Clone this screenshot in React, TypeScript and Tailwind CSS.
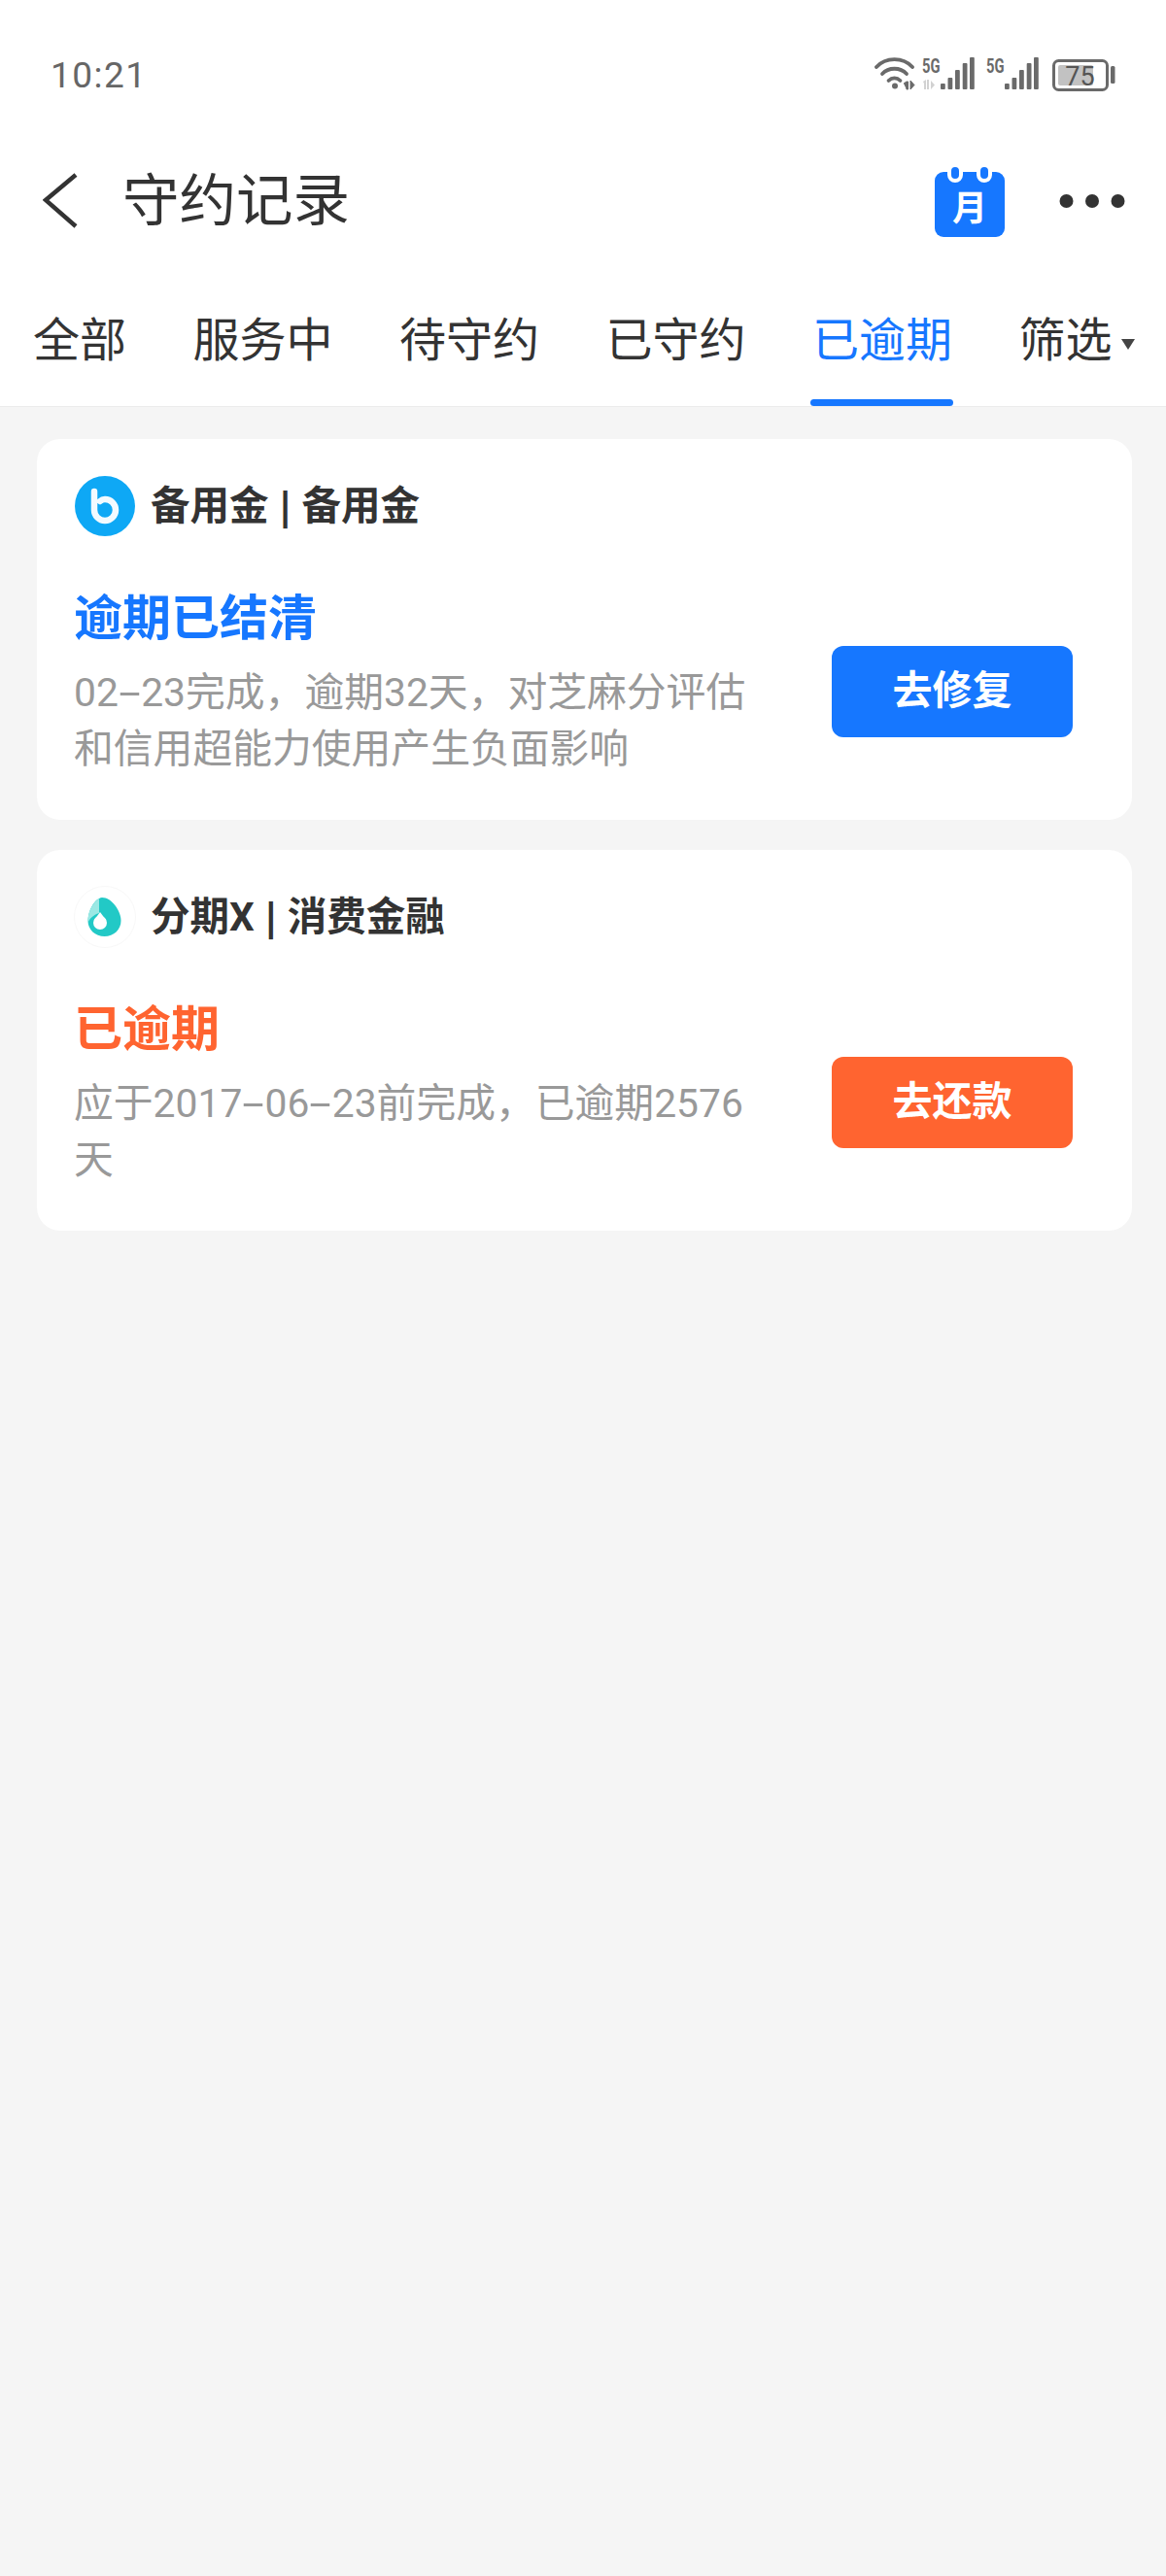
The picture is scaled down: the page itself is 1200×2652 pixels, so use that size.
const FONT = "font-['Roboto','Noto_Sans_CJK_SC',sans-serif]";

function StatusIcons() {
  const bars = [
    [0, 31],
    [7.5, 25],
    [15, 17],
    [22.7, 10],
    [30, 4],
  ];
  return (
    <svg width="250" height="40" viewBox="0 0 250 40" className="block -mt-[4px]">
      <g fill="none" stroke="#6a6a6a" strokeWidth="3.8" strokeLinecap="round">
        <path d="M2 14 C11.500 3.500 29.500 3.500 39 14" />
        <path d="M8 21 C14.500 14 26.500 14 33 21" />
        <path d="M14.500 28 C18 24.500 23 24.500 26.500 28" />
      </g>
      <circle cx="21" cy="33.5" r="3" fill="#6a6a6a" />
      <path d="M30 31 l3 -2 v8 M33 29 h1.5 v8 h-1.5 M37 28 v9 l4 -4.5 z" fill="#6a6a6a" stroke="#6a6a6a" strokeWidth="1" />
      <text x="49" y="19.500" fontFamily="Roboto, sans-serif" fontWeight="700" fontSize="21" fill="#6a6a6a" textLength="18.500" lengthAdjust="spacingAndGlyphs">5G</text>
      <path d="M50 29 l3 -2 v10 h-2 v-6 M54 27 h2 v10 h-2 z M58 28 v9 l4 -4.5 z" fill="#d2d2d2" />
      {bars.map(([x, y]) => (
        <rect key={x} x={68 + x} y={y} width="4.8" height={37 - y} rx="1" fill="#6a6a6a" />
      ))}
      <text x="115" y="19.500" fontFamily="Roboto, sans-serif" fontWeight="700" fontSize="21" fill="#6a6a6a" textLength="18.500" lengthAdjust="spacingAndGlyphs">5G</text>
      {bars.map(([x, y]) => (
        <rect key={x} x={134 + x} y={y} width="4.8" height={37 - y} rx="1" fill="#6a6a6a" />
      ))}
      <rect x="184.5" y="7.5" width="55" height="30" rx="5" fill="none" stroke="#6a6a6a" strokeWidth="3" />
      <rect x="189" y="12" width="36" height="21" rx="2" fill="#c2c2c2" />
      <text x="211.5" y="32.500" textAnchor="middle" fontFamily="Roboto, sans-serif" fontSize="27" fill="#555">75</text>
      <rect x="243" y="13" width="4.5" height="18" rx="1.5" fill="#6a6a6a" />
    </svg>
  );
}

function Calendar() {
  return (
    <div className="relative mt-[7px] w-[72px] h-[67px] rounded-[9px] bg-[#1677ff] flex items-center justify-center">
      <span className="absolute left-[13px] -top-[9px] w-[8px] h-[12px] rounded-full bg-[#1677ff] border-[4px] border-white box-content" />
      <span className="absolute left-[43px] -top-[9px] w-[8px] h-[12px] rounded-full bg-[#1677ff] border-[4px] border-white box-content" />
      <span className="mt-[8px] text-white text-[36px] leading-none font-bold">月</span>
    </div>
  );
}

function BLogo() {
  return (
    <svg width="64" height="64" viewBox="0 0 64 64" className="shrink-0">
      <circle cx="32" cy="32" r="31" fill="#0ea8f5" />
      <path d="M21 17 V36 A11 11 0 1 0 32 25 Q29 25 27 27" fill="none" stroke="#f2faff" strokeWidth="6.500" strokeLinecap="round" />
    </svg>
  );
}

function DropLogo() {
  return (
    <svg width="64" height="64" viewBox="0 0 64 64" className="shrink-0">
      <circle cx="32" cy="32" r="31.500" fill="#fff" stroke="#f8f8f8" />
      <path d="M29 12 C39 12 48.500 26 48.500 36 C48.500 45 41 52 31.500 52 C22 52 14.500 45 14.500 36 C14.500 26 21 13 29 12 Z" fill="#22c9c6" />
      <path d="M26 13 C19 17 14.500 28 14.500 36 L14.500 38 C16 34 20 30 26 28 Z" fill="#9be8e4" />
      <circle cx="27" cy="38" r="7" fill="#fff" />
      <path d="M27 27 L33 35 H21 Z" fill="#fff" />
    </svg>
  );
}

function Line({ text }: { text: string }) {
  const parts = text.split("-");
  return (
    <div className="flex whitespace-nowrap">
      {parts.map((p, i) => (
        <div key={i} className="flex">
          {i > 0 && <span className="mx-[6px] scale-x-[2]">-</span>}
          <span>{p}</span>
        </div>
      ))}
    </div>
  );
}

function Card({ logo, title, sub, status, color, lines, action, bg }: { logo: React.ReactNode; title: string; sub: string; status: string; color: string; lines: string[]; action: string; bg: string }) {
  return (
    <div className="ml-[38px] mr-[35px] h-[392px] rounded-[24px] bg-white pl-[38px] pr-[61px] pt-[38px]">
      <div className="flex items-center gap-[15px] h-[64px] -mt-[1px]">
        {logo}
        <div className="flex items-center text-[40.500px] leading-none font-bold text-[#333] whitespace-nowrap">
          <span>{title}</span>
          <span className="mx-[11px] text-[47px] leading-none font-black">|</span>
          <span>{sub}</span>
        </div>
      </div>
      <div className="flex items-center justify-between mt-[49px]">
        <div className="w-[700px]">
          <div className={`text-[50px] leading-[70px] font-bold ${color}`}>{status}</div>
          <div className="mt-[12px] text-[40.800px] leading-[58px] text-[#999]">
            {lines.map((l) => (
              <Line key={l} text={l} />
            ))}
          </div>
        </div>
        <button className={`w-[248px] h-[94px] mt-[22px] rounded-[12px] text-white text-[41px] font-bold ${bg}`}>{action}</button>
      </div>
    </div>
  );
}

export default function App() {
  const tabs = ["全部", "服务中", "待守约", "已守约", "已逾期"];
  return (
    <div className={`min-h-[2652px] w-[1200px] bg-[#f5f5f5] ${FONT}`}>
      <header className="bg-white border-b border-[#ececec] h-[419px]">
        <div className="flex items-center justify-between pl-[52px] pr-[50px] h-[154px]">
          <span className="text-[37px] leading-none text-[#666] tracking-[1.500px]">10:21</span>
          <StatusIcons />
        </div>
        <div className="flex items-center h-[106px] pl-[44px] pr-[42px]">
          <svg width="36" height="58" viewBox="0 0 36 58" className="shrink-0">
            <path d="M34 2 L3 28 L34 55" fill="none" stroke="#333" strokeWidth="4.500" />
          </svg>
          <span className="ml-[46px] text-[58.500px] leading-none text-[#333]">守约记录</span>
          <div className="ml-auto flex items-center gap-[56px]">
            <Calendar />
            <svg width="68" height="16" viewBox="0 0 68 16">
              <circle cx="7.500" cy="8" r="7" fill="#333" />
              <circle cx="34" cy="8" r="7" fill="#333" />
              <circle cx="60.500" cy="8" r="7" fill="#333" />
            </svg>
          </div>
        </div>
        <nav className="flex items-start gap-[68.500px] pl-[34px] pt-[61px] whitespace-nowrap">
          {tabs.map((t, i) => (
            <div key={t} className="relative shrink-0">
              <span className={`block text-[48px] leading-[60px] ${i === 4 ? "text-[#1677ff]" : "text-[#333]"}`}>{t}</span>
              {i === 4 && <span className="absolute -left-[2px] -right-[1px] top-[90px] h-[7px] rounded-[4px] bg-[#1677ff]" />}
            </div>
          ))}
          <div className="flex items-center gap-[9px] shrink-0">
            <span className="text-[48px] leading-[60px] text-[#333]">筛选</span>
            <span className="w-0 h-0 mt-[6px] border-l-[7px] border-r-[7px] border-t-[11px] border-l-transparent border-r-transparent border-t-[#444]" />
          </div>
        </nav>
      </header>
      <main className="flex flex-col gap-[31px] pt-[33px]">
        <Card logo={<BLogo />} title="备用金" sub="备用金" status="逾期已结清" color="text-[#1677ff]" lines={["02-23完成，逾期32天，对芝麻分评估", "和信用超能力使用产生负面影响"]} action="去修复" bg="bg-[#1677ff]" />
        <Card logo={<DropLogo />} title="分期X" sub="消费金融" status="已逾期" color="text-[#ff6430]" lines={["应于2017-06-23前完成，已逾期2576", "天"]} action="去还款" bg="bg-[#ff6430]" />
      </main>
    </div>
  );
}
